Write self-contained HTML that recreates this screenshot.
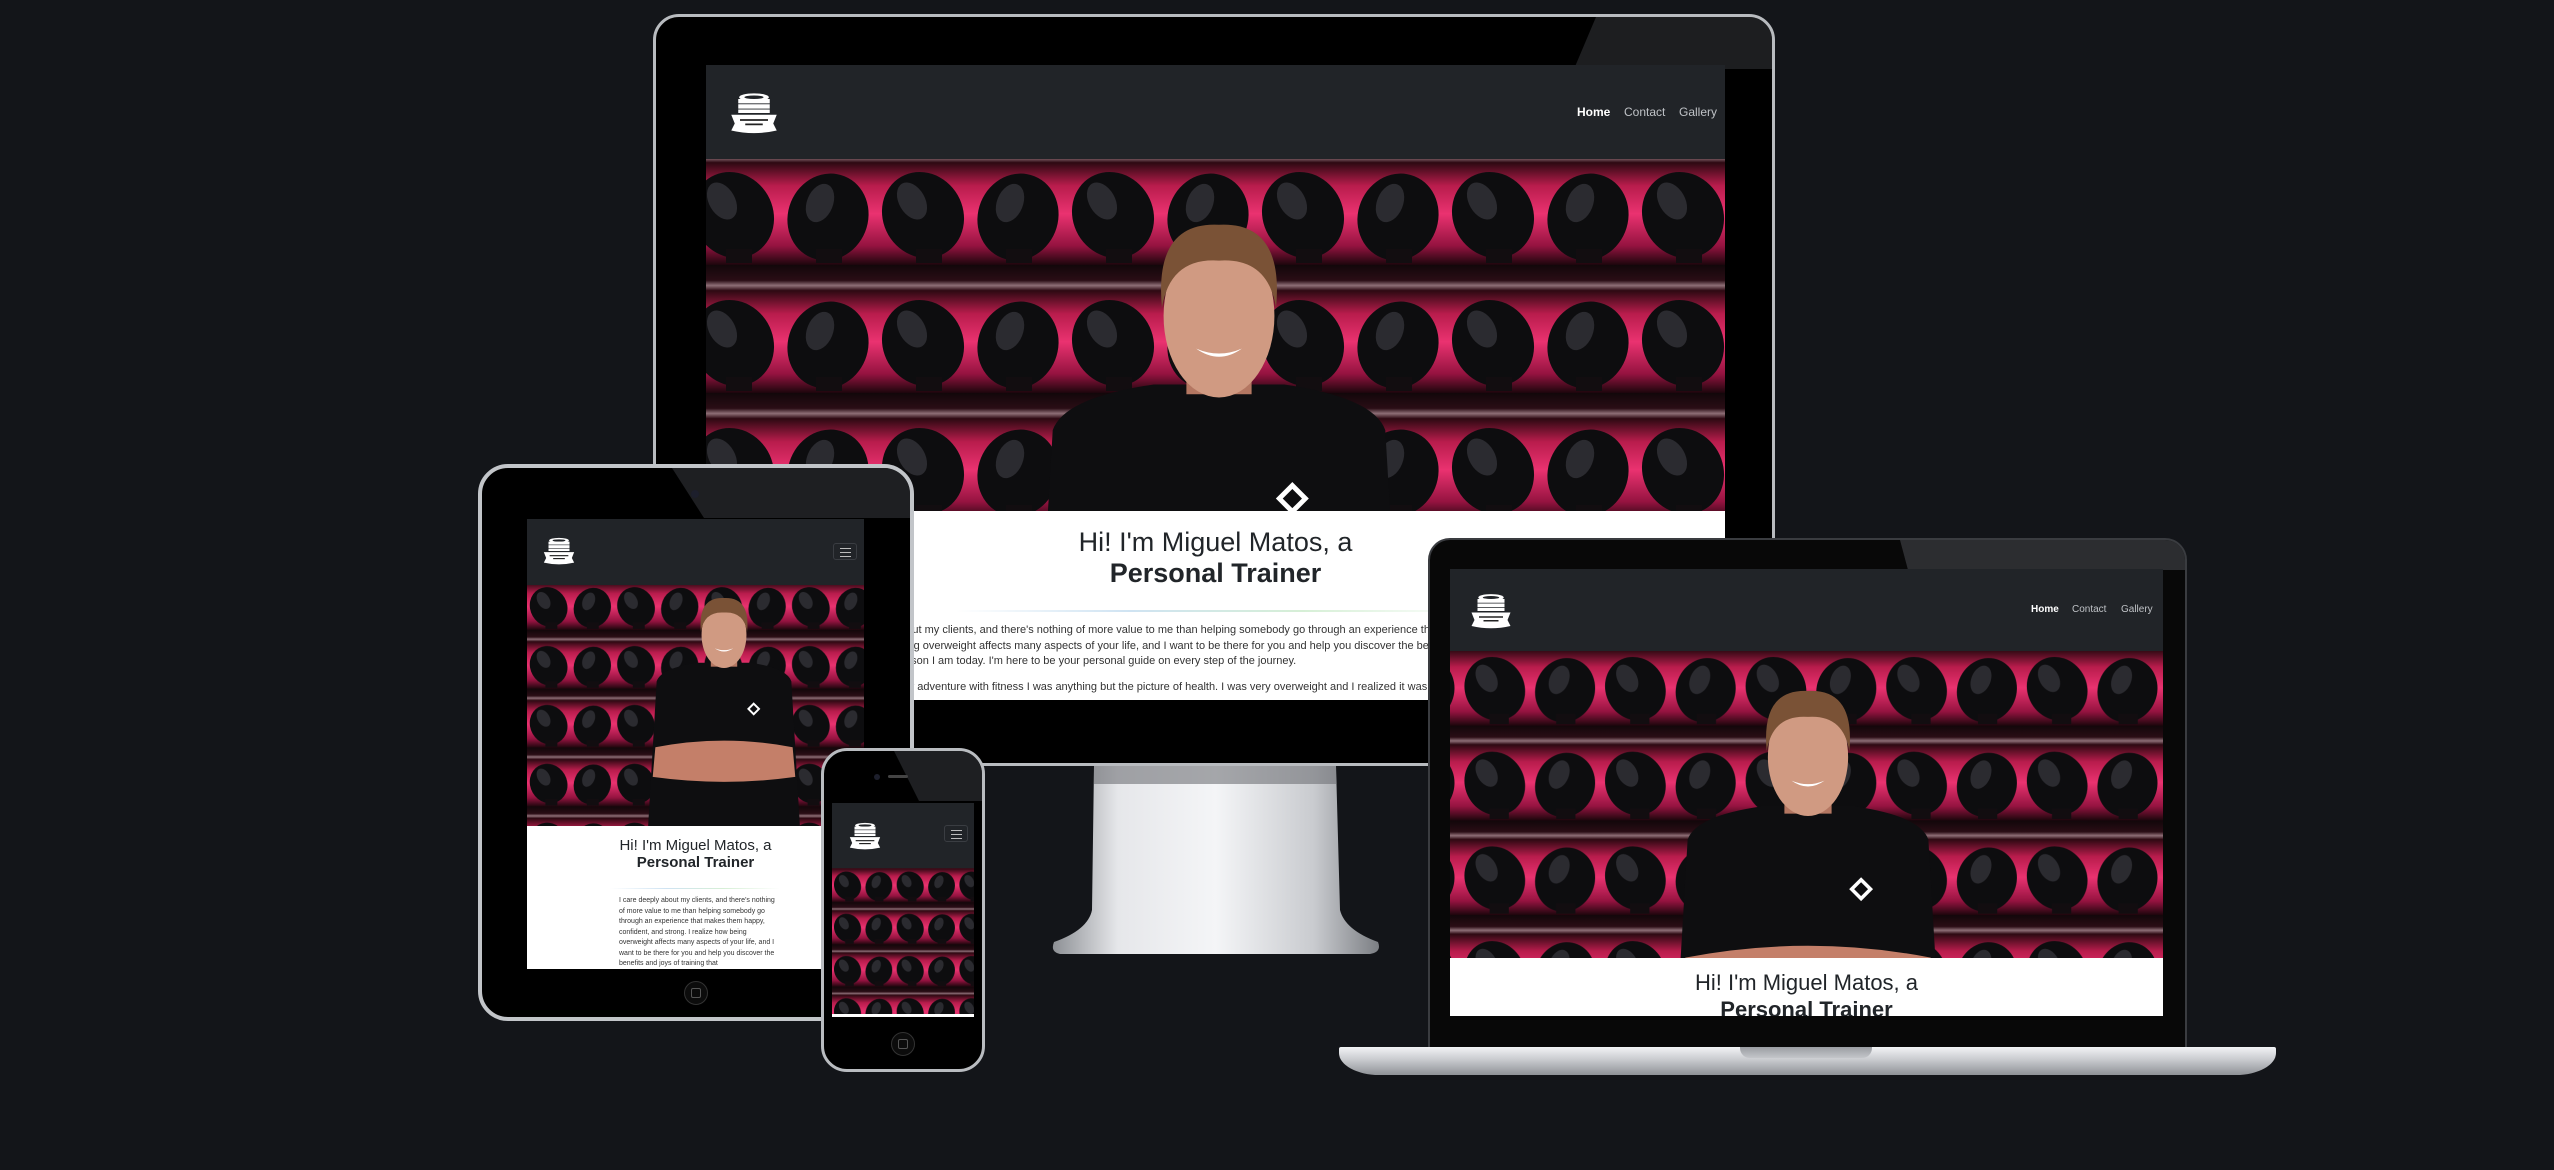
<!DOCTYPE html>
<html><head><meta charset="utf-8">
<style>
*{margin:0;padding:0;box-sizing:border-box}
body{width:2554px;height:1170px;background:#131519;overflow:hidden;position:relative;font-family:"Liberation Sans",Arial,sans-serif}
.abs{position:absolute}
.nav{position:absolute;left:0;top:0;width:100%;background:#212428}
svg{display:block}
.navl{position:absolute;color:#bfc2c6}
.ham{position:absolute;border:1px solid #3a3d42;border-radius:3px}
.ham i{position:absolute;left:25%;width:50%;height:1px;background:#bbb}
h1{font-weight:400;color:#212529;text-align:center;line-height:1.15}
h1 b{font-weight:700}
p{color:#333}
</style></head><body>

<svg width="0" height="0" style="position:absolute">
<defs>
<linearGradient id="band" x1="0" y1="0" x2="0" y2="1">
<stop offset="0" stop-color="#12070a"/><stop offset=".12" stop-color="#2a0d15"/><stop offset=".16" stop-color="#8e6f77"/><stop offset=".2" stop-color="#2d0912"/><stop offset=".38" stop-color="#b81c4c"/><stop offset=".6" stop-color="#ea3270"/><stop offset=".85" stop-color="#951340"/><stop offset="1" stop-color="#1c060c"/>
</linearGradient>
<pattern id="g1" patternUnits="userSpaceOnUse" width="190" height="128">
<rect width="190" height="128" fill="url(#band)"/>
<ellipse cx="47" cy="78" rx="40" ry="44" fill="#0d0d0f" transform="rotate(-30 47 78)"/>
<ellipse cx="36" cy="64" rx="13" ry="20" fill="#2b2b30" transform="rotate(-30 36 64)"/>
<rect x="40" y="112" width="26" height="14" fill="#120d10"/>
<ellipse cx="142" cy="80" rx="40" ry="44" fill="#0d0d0f" transform="rotate(22 142 80)"/>
<ellipse cx="134" cy="66" rx="13" ry="20" fill="#2b2b30" transform="rotate(22 134 66)"/>
<rect x="130" y="112" width="26" height="14" fill="#120d10"/>
</pattern>
<pattern id="g2" href="#g1" patternTransform="translate(10,-20) scale(.74)"/>
<pattern id="g3" href="#g1" patternTransform="translate(0,-14) scale(.46)"/>
<pattern id="g4" href="#g1" patternTransform="translate(0,-8) scale(.33)"/>
<pattern id="g0" href="#g1" patternTransform="translate(-20,-22)"/>
<g id="person">
<path d="M-115 290 L-102 70 Q-95 50 -40 42 L40 42 Q95 50 102 70 L115 290 Z" fill="#0e0e10"/>
<path d="M-104 170 Q0 150 104 170 L108 215 Q0 230 -108 215 Z" fill="#c47f69"/>
<rect x="-20" y="28" width="40" height="20" fill="#b47762"/>
<ellipse cx="0" cy="0" rx="34" ry="50" fill="#d09a82"/>
<path d="M-35 -5 Q-40 -58 0 -56 Q40 -58 35 -5 Q30 -36 0 -34 Q-30 -36 -35 -5 Z" fill="#7a5236"/>
<path d="M-14 20 Q0 30 14 20 Q0 26 -14 20Z" fill="#fff"/>
<path d="M45 104 L53 112 L45 120 L37 112 Z" fill="none" stroke="#fff" stroke-width="3"/>
</g>
<symbol id="logo" viewBox="0 0 60 48">
<ellipse cx="30" cy="6" rx="17" ry="4.5" fill="#fff"/>
<ellipse cx="30" cy="6" rx="11" ry="2" fill="#212428"/>
<rect x="12" y="8" width="36" height="5" fill="#fff"/><rect x="12" y="14" width="36" height="5" fill="#fff"/><rect x="12" y="20" width="36" height="4" fill="#fff"/>
<path d="M4 26 L56 26 L52 36 L56 44 Q30 50 4 44 L8 36 Z" fill="#fff"/>
<rect x="14" y="31" width="32" height="2" fill="#222"/><rect x="20" y="36" width="20" height="2" fill="#222"/>
</symbol>
<linearGradient id="silver" x1="0" y1="0" x2="1" y2="0">
<stop offset="0" stop-color="#8d9095"/><stop offset=".2" stop-color="#e6e7ea"/><stop offset=".5" stop-color="#f4f5f7"/><stop offset=".8" stop-color="#c9cbcf"/><stop offset="1" stop-color="#7c7f84"/>
</linearGradient>
</defs></svg>

<!-- MONITOR -->
<svg class="abs" style="left:1040px;top:760px" width="360" height="200">
<path d="M54 6 L296 6 L300 150 Q305 170 338 182 Q342 192 330 194 L20 194 Q10 192 14 182 Q48 170 52 150 Z" fill="url(#silver)"/>
<rect x="54" y="6" width="242" height="18" fill="#6f7277" opacity=".6"/>
</svg>
<div class="abs" style="left:653px;top:14px;width:1122px;height:752px;border:3px solid #b8bbbf;border-radius:26px;background:#000;overflow:hidden">
<div class="abs" style="left:0;top:0;width:100%;height:100%;background:#2a2b2e;clip-path:polygon(940px 0,100% 0,100% 52px,918px 52px);opacity:.7"></div>
</div>
<div class="abs" style="left:706px;top:65px;width:1019px;height:635px;background:#fff;overflow:hidden">
<div class="nav" style="height:94px">
<svg class="abs" style="left:21px;top:27px" width="54" height="42"><use href="#logo"/></svg>
<span class="navl" style="left:871px;top:40px;font-size:12px;color:#fff;font-weight:700">Home</span>
<span class="navl" style="left:918px;top:40px;font-size:12px">Contact</span>
<span class="navl" style="left:973px;top:40px;font-size:12px">Gallery</span>
</div>
<svg class="abs" style="left:0;top:94px" width="1019" height="352">
<rect width="1019" height="352" fill="url(#g0)"/>
<g transform="translate(513,157) scale(1.63)"><use href="#person"/></g>
</svg>
<h1 class="abs" style="left:0;top:462px;width:100%;font-size:27px">Hi! I'm Miguel Matos, a<br><b>Personal Trainer</b></h1>
<div class="abs" style="left:250px;top:545px;width:520px;height:2px;background:linear-gradient(90deg,#fff,#cfe3f2,#d6efd6,#fff)"></div>
<p class="abs" style="left:122px;top:558px;width:1100px;font-size:11px;line-height:15.5px;white-space:nowrap">I care deeply about my clients, and there's nothing of more value to me than helping somebody go through an experience that makes them happy, confident, and strong.<br>I realize how being overweight affects many aspects of your life, and I want to be there for you and help you discover the benefits and joys of training that<br>made me the person I am today. I'm here to be your personal guide on every step of the journey.</p>
<p class="abs" style="left:122px;top:616px;width:1100px;font-size:11px;white-space:nowrap">When I began my adventure with fitness I was anything but the picture of health. I was very overweight and I realized it was because of my lifestyle.</p>
</div>

<!-- LAPTOP -->
<div class="abs" style="left:1428px;top:538px;width:759px;height:512px;background:#080808;border:2px solid #3a3c40;border-bottom:none;border-radius:22px 22px 0 0;overflow:hidden">
<div class="abs" style="left:0;top:0;width:100%;height:100%;background:#2c2d30;clip-path:polygon(470px 0,100% 0,100% 30px,478px 30px)"></div>
</div>
<div class="abs" style="left:1450px;top:569px;width:713px;height:447px;background:#fff;overflow:hidden">
<div class="nav" style="height:82px">
<svg class="abs" style="left:17px;top:24px" width="48" height="36"><use href="#logo"/></svg>
<span class="navl" style="left:581px;top:35px;font-size:10px;color:#fff;font-weight:700">Home</span>
<span class="navl" style="left:622px;top:35px;font-size:10px">Contact</span>
<span class="navl" style="left:671px;top:35px;font-size:10px">Gallery</span>
</div>
<svg class="abs" style="left:0;top:82px" width="713" height="307">
<rect width="713" height="307" fill="url(#g2)"/>
<g transform="translate(358,106) scale(1.18)"><use href="#person"/></g>
</svg>
<h1 class="abs" style="left:0;top:400px;width:100%;font-size:22px;line-height:27px">Hi! I'm Miguel Matos, a<br><b>Personal Trainer</b></h1>
</div>
<div class="abs" style="left:1339px;top:1047px;width:937px;height:28px;border-radius:2px 2px 40px 40px/2px 2px 22px 22px;background:linear-gradient(#f2f3f5,#c9cbcf 45%,#8f9297)"></div>
<div class="abs" style="left:1740px;top:1047px;width:132px;height:11px;border-radius:0 0 10px 10px;background:linear-gradient(#9a9da2,#c4c6ca)"></div>

<!-- TABLET -->
<div class="abs" style="left:478px;top:464px;width:436px;height:557px;border:4px solid #c2c5c9;border-radius:30px;background:#000;overflow:hidden">
<div class="abs" style="left:0;top:0;width:100%;height:100%;background:#26272a;clip-path:polygon(190px 0,100% 0,100% 50px,222px 50px);opacity:.8"></div>
</div>
<div class="abs" style="left:691px;top:490px;width:8px;height:8px;border-radius:50%;background:#1d1f2c"></div>
<div class="abs" style="left:684px;top:981px;width:24px;height:24px;border-radius:50%;border:1px solid #333;background:#0c0c0c"></div>
<div class="abs" style="left:691px;top:988px;width:10px;height:10px;border-radius:2px;border:1px solid #555"></div>
<div class="abs" style="left:527px;top:519px;width:337px;height:450px;background:#fff;overflow:hidden">
<div class="nav" style="height:66px">
<svg class="abs" style="left:13px;top:18px" width="38" height="28"><use href="#logo"/></svg>
<div class="ham" style="left:306px;top:24px;width:24px;height:17px"><i style="top:4px"></i><i style="top:8px"></i><i style="top:12px"></i></div>
</div>
<svg class="abs" style="left:0;top:66px" width="337" height="241">
<rect width="337" height="241" fill="url(#g3)"/>
<g transform="translate(197,50) scale(.66)"><use href="#person"/></g>
</svg>
<h1 class="abs" style="left:0;top:318px;width:100%;font-size:15px;line-height:17px">Hi! I'm Miguel Matos, a<br><b>Personal Trainer</b></h1>
<div class="abs" style="left:83px;top:369px;width:170px;height:1px;background:linear-gradient(90deg,#fff,#cfe3f2,#d6efd6,#fff)"></div>
<p class="abs" style="left:92px;top:377px;width:156px;font-size:7px;line-height:10.5px">I care deeply about my clients, and there's nothing of more value to me than helping somebody go through an experience that makes them happy, confident, and strong. I realize how being overweight affects many aspects of your life, and I want to be there for you and help you discover the benefits and joys of training that</p>
</div>

<!-- PHONE -->
<div class="abs" style="left:821px;top:748px;width:164px;height:324px;border:3px solid #b9bcc0;border-radius:26px;background:#000;overflow:hidden">
<div class="abs" style="left:0;top:0;width:100%;height:100%;background:#26272a;clip-path:polygon(70px 0,100% 0,100% 50px,95px 50px);opacity:.8"></div>
</div>
<div class="abs" style="left:874px;top:774px;width:6px;height:6px;border-radius:50%;background:#1d1f2c"></div>
<div class="abs" style="left:888px;top:775px;width:20px;height:3px;border-radius:2px;background:#444"></div>
<div class="abs" style="left:891px;top:1032px;width:24px;height:24px;border-radius:50%;border:1px solid #333;background:#0c0c0c"></div>
<div class="abs" style="left:898px;top:1039px;width:10px;height:10px;border-radius:2px;border:1px solid #555"></div>
<div class="abs" style="left:832px;top:803px;width:142px;height:214px;background:#fff;overflow:hidden">
<div class="nav" style="height:65px">
<svg class="abs" style="left:15px;top:19px" width="36" height="28"><use href="#logo"/></svg>
<div class="ham" style="left:112px;top:22px;width:24px;height:17px"><i style="top:4px"></i><i style="top:8px"></i><i style="top:12px"></i></div>
</div>
<svg class="abs" style="left:0;top:65px" width="142" height="146">
<rect width="142" height="146" fill="url(#g4)"/>
</svg>
</div>

</body></html>
